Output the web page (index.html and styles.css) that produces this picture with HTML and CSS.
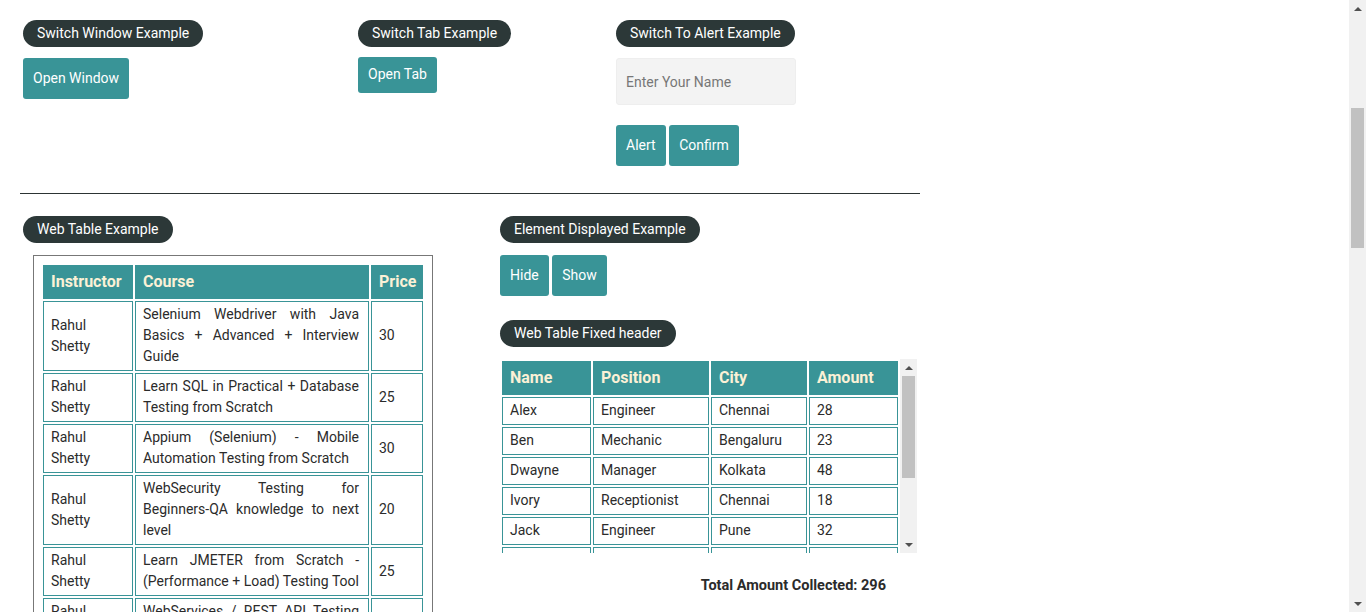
FILE: index.html
```html
<!DOCTYPE html>
<html lang="en">
<head>
<meta charset="utf-8">
<title>Practice Page</title>
<link rel="stylesheet" href="styles.css">
</head>
<body>
<div class="page">
  <div class="wrap row-top">
    <div class="col col-a">
      <div class="legend">Switch Window Example</div>
      <div class="actions"><button class="btn">Open Window</button></div>
    </div>
    <div class="col col-b">
      <div class="legend">Switch Tab Example</div>
      <div class="actions tight"><button class="btn btn-small">Open Tab</button></div>
    </div>
    <div class="col col-c">
      <div class="legend">Switch To Alert Example</div>
      <div class="actions"><input class="name-input" type="text" placeholder="Enter Your Name"></div>
      <div class="actions alert-actions">
        <button class="btn">Alert</button>
        <button class="btn">Confirm</button>
      </div>
    </div>
  </div>

  <div class="wrap divider"></div>

  <div class="wrap row-bottom">
    <div class="col col-left">
      <div class="legend">Web Table Example</div>
      <div class="table-box">
        <table class="courses">
          <colgroup><col class="c-instr"><col class="c-course"><col class="c-price"></colgroup>
          <thead><tr><th>Instructor</th><th>Course</th><th>Price</th></tr></thead>
          <tbody>
            <tr><td>Rahul Shetty</td><td class="just">Selenium Webdriver with Java Basics + Advanced + Interview Guide</td><td>30</td></tr>
            <tr><td>Rahul Shetty</td><td class="just">Learn SQL in Practical + Database Testing from Scratch</td><td>25</td></tr>
            <tr><td>Rahul Shetty</td><td class="just">Appium (Selenium) - Mobile Automation Testing from Scratch</td><td>30</td></tr>
            <tr><td>Rahul Shetty</td><td class="just">WebSecurity Testing for Beginners-QA knowledge to next level</td><td>20</td></tr>
            <tr><td>Rahul Shetty</td><td class="just">Learn JMETER from Scratch - (Performance + Load) Testing Tool</td><td>25</td></tr>
            <tr><td>Rahul Shetty</td><td class="just">WebServices / REST API Testing with SoapUI</td><td>35</td></tr>
            <tr><td>Rahul Shetty</td><td class="just">QA Expert Course :Software Testing + Bugzilla + SQL + Agile</td><td>25</td></tr>
            <tr><td>Rahul Shetty</td><td class="just">Master Selenium Automation in simple Python Language</td><td>25</td></tr>
            <tr><td>Rahul Shetty</td><td class="just">Advanced Selenium Framework Pageobject, TestNG, Maven, Jenkins,Jira</td><td>20</td></tr>
            <tr><td>Rahul Shetty</td><td class="just">Write effective QA Resume that will turn to interview call</td><td>0</td></tr>
          </tbody>
        </table>
      </div>
    </div>
    <div class="col col-right">
      <div class="legend">Element Displayed Example</div>
      <div class="actions hide-show">
        <button class="btn">Hide</button>
        <button class="btn">Show</button>
      </div>
      <div class="legend legend-gap">Web Table Fixed header</div>
      <div class="fixed-wrap">
        <div class="fixed-view">
          <table class="people">
            <colgroup><col class="p-name"><col class="p-pos"><col class="p-city"><col class="p-amt"></colgroup>
            <thead><tr><th>Name</th><th>Position</th><th>City</th><th>Amount</th></tr></thead>
            <tbody>
              <tr><td>Alex</td><td>Engineer</td><td>Chennai</td><td>28</td></tr>
              <tr><td>Ben</td><td>Mechanic</td><td>Bengaluru</td><td>23</td></tr>
              <tr><td>Dwayne</td><td>Manager</td><td>Kolkata</td><td>48</td></tr>
              <tr><td>Ivory</td><td>Receptionist</td><td>Chennai</td><td>18</td></tr>
              <tr><td>Jack</td><td>Engineer</td><td>Pune</td><td>32</td></tr>
              <tr><td>Joe</td><td>Postman</td><td>Chennai</td><td>46</td></tr>
              <tr><td>Raymond</td><td>Businessman</td><td>Mumbai</td><td>37</td></tr>
              <tr><td>Ronaldo</td><td>Sportsman</td><td>Chennai</td><td>31</td></tr>
              <tr><td>Smith</td><td>Cricketer</td><td>Delhi</td><td>33</td></tr>
            </tbody>
          </table>
        </div>
        <div class="vscroll inner-scroll">
          <span class="arrow arrow-up"></span>
          <span class="thumb"></span>
          <span class="arrow arrow-down"></span>
        </div>
      </div>
      <div class="total">Total Amount Collected: 296</div>
    </div>
  </div>

  <div class="wrap lower">
    <div class="col">
      <div class="legend">Mouse Hover Example</div>
      <div class="actions"><button class="btn">Mouse Hover</button></div>
    </div>
    <div class="col iframe-col">
      <div class="legend">iFrame Example</div>
      <div class="iframe-box"></div>
    </div>
  </div>
</div>

<div class="vscroll page-scroll" aria-hidden="true">
  <span class="arrow arrow-up"></span>
  <span class="track-gap"></span>
  <span class="thumb"></span>
  <span class="arrow arrow-down"></span>
</div>
</body>
</html>
```

FILE: styles.css
```css
body {
  margin: 0;
  font-family: "Roboto", "Liberation Sans", sans-serif;
  font-size: 14px;
  line-height: 21px;
  color: #2b2b2b;
  background: #fff;
}
.page {
  width: 1349px;
}
.wrap {
  margin-left: 20px;
  width: 900px;
}
.row-top {
  display: flex;
  padding-top: 20px;
}
.col {
  padding-left: 3px;
  box-sizing: border-box;
}
.col-a { width: 335px; }
.col-b { width: 258px; }
.col-c { flex: 1; }
.legend {
  display: inline-block;
  background: #2c3838;
  color: #fff;
  padding: 0 14px;
  line-height: 27px;
  border-radius: 14px;
  font-size: 14px;
}
.actions {
  margin-top: 11px;
}
.actions.tight {
  margin-top: 10px;
}
.alert-actions {
  margin-top: 20px;
}
.hide-show {
  margin-top: 12px;
}
.btn {
  font-family: inherit;
  background: #399497;
  color: #fff;
  border: none;
  border-radius: 3px;
  font-size: 14px;
  line-height: 21px;
  padding: 10px 10px;
  margin: 0;
  cursor: pointer;
}
.btn-small {
  padding: 7px 10px 8px;
}
.name-input {
  display: block;
  width: 180px;
  height: 47px;
  box-sizing: border-box;
  border: 1px solid #eeeeee;
  border-radius: 3px;
  background: #f3f3f3;
  padding: 0 9px;
  font-family: inherit;
  font-size: 14px;
  color: #333;
}
.name-input::placeholder {
  color: #777;
}
.divider {
  margin-top: 27px;
  border-top: 1px solid #2c3434;
}
.row-bottom {
  display: flex;
  padding-top: 22px;
}
.col-left {
  width: 477px;
}
.col-right {
  flex: 1;
}
.table-box {
  margin-top: 12px;
  margin-left: 10px;
  width: 400px;
  box-sizing: border-box;
  border: 1px solid #777;
  padding: 7px;
}
table {
  border-spacing: 2px;
  table-layout: fixed;
}
th {
  background: #399497;
  color: #fbf1d6;
  font-size: 16px;
  font-weight: bold;
  text-align: left;
  line-height: 27px;
  padding: 2px 7px 3px;
  border: 1px solid #399497;
}
td {
  border: 1px solid #399497;
  padding: 2px 7px 3px;
  vertical-align: middle;
  font-size: 14px;
}
td.just {
  text-align: justify;
  padding-right: 9px;
}
.courses {
  width: 384px;
}
.c-instr { width: 90px; }
.c-course { width: 234px; }
.c-price { width: 52px; }
.legend-gap {
  margin-top: 24px;
}
.fixed-wrap {
  margin-top: 12px;
  width: 417px;
  height: 194px;
  display: flex;
}
.fixed-view {
  width: 400px;
  overflow: hidden;
}
.people {
  width: 400px;
}
.p-name { width: 89px; }
.p-pos { width: 116px; }
.p-city { width: 96px; }
.p-amt { width: 89px; }
.vscroll {
  width: 17px;
  background: #f1f1f1;
  display: flex;
  flex-direction: column;
  align-items: center;
  flex-shrink: 0;
}
.arrow {
  width: 17px;
  height: 17px;
  display: flex;
  align-items: center;
  justify-content: center;
  flex-shrink: 0;
}
.arrow::before {
  content: "";
  width: 0;
  height: 0;
  border-left: 4px solid transparent;
  border-right: 4px solid transparent;
}
.arrow-up::before {
  border-bottom: 4px solid #505050;
}
.arrow-down::before {
  border-top: 4px solid #505050;
}
.arrow-down {
  margin-top: auto;
}
.thumb {
  width: 13px;
  background: #c1c1c1;
  flex-shrink: 0;
}
.inner-scroll .thumb {
  height: 102px;
}
.page-scroll {
  position: fixed;
  top: 0;
  right: 0;
  bottom: 0;
}
.page-scroll .track-gap {
  height: 91px;
  flex-shrink: 0;
}
.page-scroll .thumb {
  height: 140px;
}
.total {
  margin-top: 22px;
  text-align: right;
  width: 386px;
  font-weight: bold;
  font-size: 14.5px;
}
.lower {
  display: flex;
  padding-top: 40px;
  gap: 60px;
}
.iframe-col {
  flex: 1;
}
.iframe-box {
  margin-top: 11px;
  height: 900px;
  border: 1px solid #ccc;
}
```
